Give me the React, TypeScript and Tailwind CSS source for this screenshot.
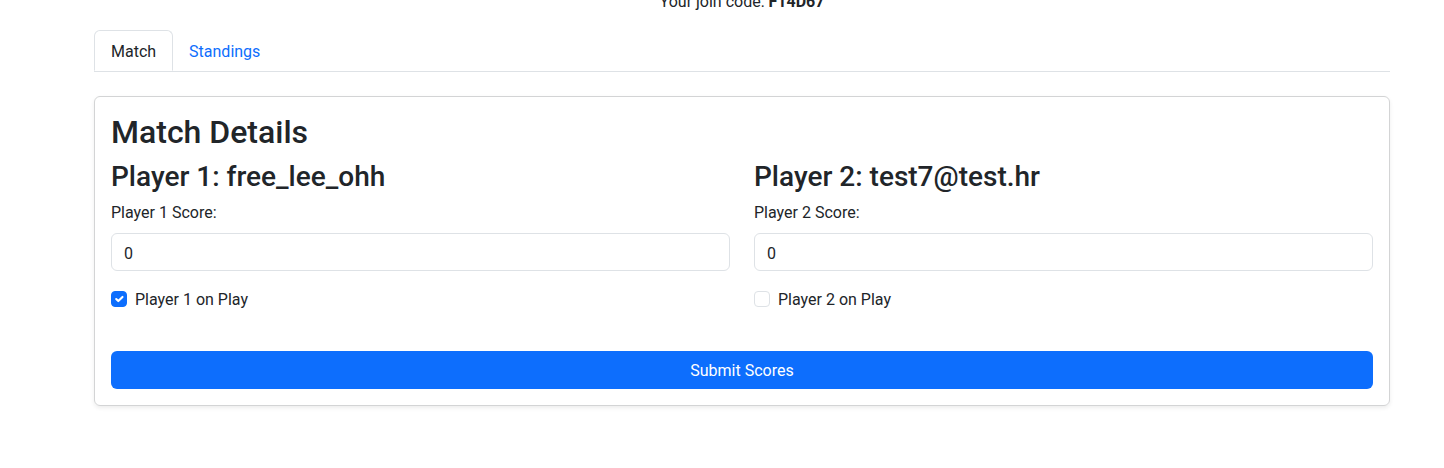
import { useState } from "react";

function PlayerColumn({
  num,
  name,
  checked,
  onToggle,
}: {
  num: number;
  name: string;
  checked: boolean;
  onToggle: () => void;
}) {
  return (
    <div className="flex flex-col">
      <h3 className="text-[28px] leading-[33.6px] font-medium mb-[7px] pt-px">
        Player {num}: {name}
      </h3>
      <label className="text-base leading-6 mb-2">Player {num} Score:</label>
      <input
        type="text"
        defaultValue="0"
        className="h-[38px] w-full rounded-[6px] border border-[#dee2e6] px-3 pt-[2px] text-base text-[#212529] outline-none"
      />
      <div className="flex items-center mt-4 h-6">
        <button
          type="button"
          onClick={onToggle}
          className={
            checked
              ? "w-4 h-4 rounded-[4px] bg-[#0d6efd] border border-[#0d6efd] flex items-center justify-center"
              : "w-4 h-4 rounded-[4px] bg-white border border-[#dee2e6]"
          }
        >
          {checked && (
            <svg viewBox="0 0 20 20" className="w-[14px] h-[14px]">
              <path
                d="M6 10l3 3l6-6"
                fill="none"
                stroke="#fff"
                strokeWidth="3"
                strokeLinecap="round"
                strokeLinejoin="round"
              />
            </svg>
          )}
        </button>
        <span className="ml-2 text-base leading-6 pt-[2px]">Player {num} on Play</span>
      </div>
    </div>
  );
}

export default function App() {
  const [p1, setP1] = useState(true);
  const [p2, setP2] = useState(false);

  return (
    <div className="bg-white min-h-[468px] text-[#212529] font-['Roboto',sans-serif] overflow-hidden">
      <div className="ml-[94px] w-[1296px]">
        <p className="text-center text-base leading-6 -mt-[10px]">
          Your join code: <strong className="font-bold">F14D67</strong>
        </p>

        {/* Tabs */}
        <div className="mt-[16px] flex border-b border-[#dee2e6]">
          <button className="px-4 pt-[2px] h-[41px] -mb-px text-base bg-white border border-[#dee2e6] border-b-white rounded-t-[6px] text-[#212529]">
            Match
          </button>
          <button className="px-4 pt-[2px] h-[41px] text-base text-[#0d6efd]">Standings</button>
        </div>

        {/* Card */}
        <div className="mt-6 border border-[#d3d4d5] rounded-[6px] shadow-[0_2px_4px_rgba(0,0,0,0.075)] p-4">
          <h2 className="text-[32px] leading-[38.4px] font-medium mb-2">Match Details</h2>
          <div className="grid grid-cols-2 gap-x-6">
            <PlayerColumn num={1} name="free_lee_ohh" checked={p1} onToggle={() => setP1(!p1)} />
            <PlayerColumn num={2} name="test7@test.hr" checked={p2} onToggle={() => setP2(!p2)} />
          </div>
          <button className="mt-10 w-full h-[38px] pt-[2px] rounded-[6px] bg-[#0d6efd] text-white text-base">
            Submit Scores
          </button>
        </div>
      </div>
    </div>
  );
}
